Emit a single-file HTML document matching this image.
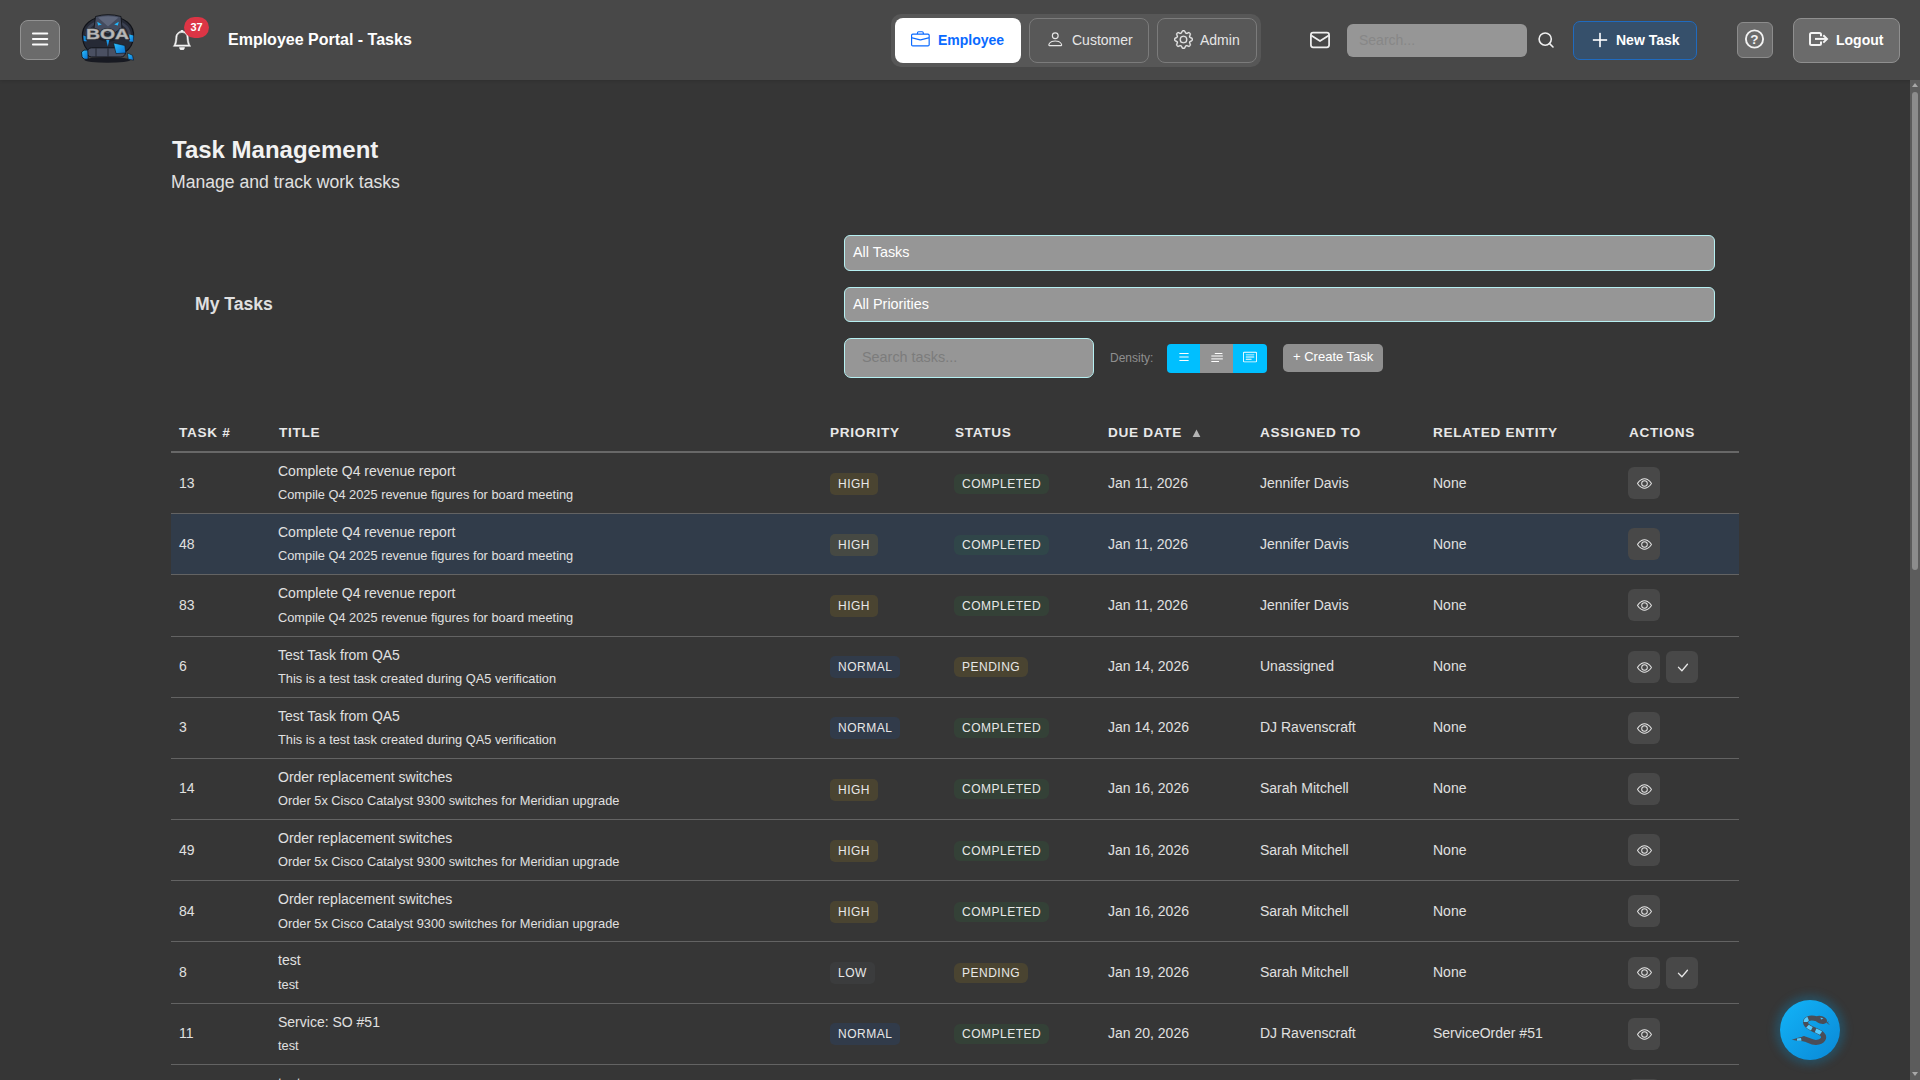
<!DOCTYPE html>
<html><head><meta charset="utf-8">
<style>
*{box-sizing:border-box}
html,body{margin:0;padding:0;width:1920px;height:1080px;overflow:hidden;background:#363636;font-family:"Liberation Sans",sans-serif;color:#e0e0e0}
.abs{position:absolute}
svg{display:block}
#hdr{position:absolute;left:0;top:0;width:1920px;height:80px;background:#484848;box-shadow:0 1px 3px rgba(0,0,0,0.12)}
.btn{position:absolute;border-radius:8px}
#menu{left:20px;top:20px;width:40px;height:40px;background:#6b6b6b;border:1px solid #929292;border-radius:8px}
#ttl{left:228px;top:30px;font-size:16px;font-weight:bold;color:#fff;line-height:20px;white-space:nowrap}
#badge{left:184px;top:17px;width:25px;height:21px;border-radius:11px;background:#dc3545;color:#fff;font-size:11px;font-weight:bold;text-align:center;line-height:21px}
#grp{left:891px;top:14px;width:370px;height:53px;background:#575757;border-radius:10px}
.nb{position:absolute;top:18px;height:45px;border-radius:8px;font-size:14px;white-space:nowrap}
#emp{left:895px;width:126px;background:#fff;color:#0a6aff;font-weight:bold}
#cus{left:1029px;width:120px;background:#585858;border:1px solid #7b7b7b;color:#e6e6e6}
#adm{left:1157px;width:100px;background:#585858;border:1px solid #7b7b7b;color:#e6e6e6}
.nb span{position:absolute;top:13px;line-height:18px}
.nb svg{position:absolute}
#hsearch{left:1347px;top:24px;width:180px;height:33px;background:#969696;border-radius:6px}
#hsearch span{position:absolute;left:12px;top:7px;font-size:14px;line-height:18px;color:#878787}
#newt{left:1573px;top:21px;width:124px;height:39px;background:#36506b;border:1px solid #1f6bc0;border-radius:7px;color:#fff;font-weight:bold;font-size:14px}
#help{left:1737px;top:22px;width:36px;height:36px;background:#6b6b6b;border:1px solid #8c8c8c;border-radius:6px}
#logout{left:1793px;top:18px;width:107px;height:45px;background:#6b6b6b;border:1px solid #8f8f8f;border-radius:8px;color:#fff;font-weight:bold;font-size:14px}
/* content */
#h1{left:172px;top:136px;font-size:24px;font-weight:bold;color:#f2f2f2;line-height:28.8px;white-space:nowrap}
#sub{left:171px;top:172px;font-size:17.6px;color:#e0e0e0;line-height:21.12px;white-space:nowrap}
#mytasks{left:195px;top:294px;font-size:17.6px;font-weight:bold;color:#e0e0e0;line-height:21.12px;white-space:nowrap}
.sel{position:absolute;left:844px;width:871px;height:35.6px;background:#969696;border:1px solid #b6f0f2;border-radius:6px;color:#fff;font-size:14.4px}
.sel span{position:absolute;left:8px;top:7px;line-height:18px}
#sel1{top:235.2px}
#sel2{top:286.8px}
#tsearch{left:844px;top:338px;width:250px;height:40px;background:#969696;border:1px solid #b6f0f2;border-radius:7px}
#tsearch span{position:absolute;left:17px;top:9px;font-size:14.4px;line-height:18px;color:#7c7c7c}
#dens{left:1110px;top:351px;font-size:12px;line-height:15px;color:#8f8f8f}
#dgrp{left:1167px;top:344px;width:100px;height:29px;border-radius:4px;overflow:hidden;background:#00bfff}
#dgrp .mid{position:absolute;left:33px;top:0;width:33px;height:29px;background:#939393}
#create{left:1283px;top:344px;width:100px;height:28px;background:#8f8f8f;border-radius:5px;color:#fff;font-size:13px}
#create span{position:absolute;left:10px;top:5px;line-height:15px}
/* table */
#tbl{position:absolute;left:171px;top:414.55px;width:1568px;border-collapse:collapse;table-layout:fixed}
#tbl th{font-size:13.6px;font-weight:bold;letter-spacing:0.68px;text-align:left;color:#e8e8e8;padding:8px 8px;line-height:20.4px;border-bottom:2px solid #686868;white-space:nowrap}
#tbl td{padding:8px 8px;font-size:14px;line-height:21px;border-bottom:1px solid #636363;vertical-align:middle;white-space:nowrap;color:#e0e0e0}
#tbl tr.hl td{background:#313c4a}
.t1{line-height:21px;font-size:14px;position:relative;left:-1px}
.t2{font-size:12.8px;line-height:19.1875px;margin-top:4px;position:relative;left:-1px;top:-0.7px}
.bd{display:inline-block;font-size:12px;letter-spacing:0.5px;padding:0 8px;border-radius:5px;color:#e8e8e8;vertical-align:baseline;line-height:normal}
.pr{padding-top:4px;padding-bottom:4px;position:relative;top:0.6px}
.st{padding-top:3px;padding-bottom:3px;position:relative;left:-1px;border-radius:6px}
.high{background:rgba(255,193,7,0.1)}
.normal{background:rgba(13,110,253,0.1)}
.low{background:rgba(108,117,125,0.1)}
.comp{background:rgba(40,167,69,0.1)}
.pend{background:rgba(255,193,7,0.1)}
.ab{display:inline-block;width:32px;height:32px;border-radius:6px;background:#484848;vertical-align:middle;margin-right:6px;position:relative;left:-1px}
.ab svg{position:absolute;left:8px;top:8px}
#sbar{left:1910px;top:80px;width:10px;height:1000px;background:#5c5c5c}
#thumb{left:1912px;top:92px;width:6px;height:478px;background:#8c8c8c;border-radius:3px}
#fab{left:1780px;top:1000px;width:60px;height:60px;border-radius:30px;background:linear-gradient(135deg,#12b4f8,#0a88d6);box-shadow:0 0 9px 5px rgba(0,150,220,0.25)}
</style></head>
<body>
<div id="hdr"></div>
<div id="menu" class="abs"><svg style="position:absolute;left:0;top:0" width="38" height="38" viewBox="0 0 38 38" stroke="#fafafa" stroke-width="1.9" stroke-linecap="round"><path d="M11.9 12.5H26.3M11.9 18H26.3M11.9 23.5H26.3"/></svg></div>
<!-- logo -->
<svg class="abs" style="left:75px;top:10px" width="70" height="60" viewBox="0 0 70 60">
<defs>
<linearGradient id="lgs" x1="0" y1="0" x2="0" y2="1"><stop offset="0" stop-color="#dcdcdc"/><stop offset="0.55" stop-color="#a9a9a9"/><stop offset="1" stop-color="#7d7d7d"/></linearGradient>
<linearGradient id="lgb" x1="0" y1="0" x2="1" y2="1"><stop offset="0" stop-color="#2cc3ff"/><stop offset="1" stop-color="#0a6fd0"/></linearGradient>
</defs>
<ellipse cx="32.5" cy="50" rx="23" ry="2.8" fill="#181a22"/>
<path d="M7.5 27 C6.5 15 16 6.5 33 6 C50 6.5 59.5 15 58.5 27 C58 34 55 39 50 42 L15 42 C10.5 39 8 34 7.5 27Z" fill="#262a36" stroke="#101218" stroke-width="1.2"/>
<path d="M11.5 25 C11.5 16 20 11 33 10.5 C46 11 54.5 16 54.5 25" fill="none" stroke="#3b4152" stroke-width="2.6"/>
<path d="M20.5 6.5 Q33 2.8 46 6.5 L47 18 Q40.5 24 33 24 Q25.5 24 19 18Z" fill="#444b5e" stroke="#12141a" stroke-width="0.9"/>
<path d="M23 7.5 Q33 5 43.5 7.5 L33 16.5Z" fill="#5e667b"/>
<path d="M22.2 11.8 L26.8 14.6 L23.2 15.6Z M43.8 11.8 L39.2 14.6 L42.8 15.6Z" fill="#22b8ff"/>
<path d="M22 23 Q33 31 44 23 L43 29 Q33 35 23 29Z" fill="#1b1e27"/>
<path d="M30.3 26 L32.8 36.5 L35.3 26Z" fill="url(#lgb)"/>
<path d="M54.3 24.5 L58.4 25.6 L58.3 31.8 L54.6 31.5Z" fill="url(#lgb)"/>
<path d="M8.3 25.5 L11.3 26.5 L11.6 31.5 L8.8 31Z" fill="#1486de"/>
<rect x="12" y="37.8" width="38.5" height="9.2" rx="4.6" fill="#4a5062" stroke="#101218" stroke-width="1"/>
<path d="M21 38.3 V46.5 M33 38.3 V46.5" stroke="#1a1d26" stroke-width="0.8"/>
<path d="M38.5 33 L49.8 35.5 L50.8 43 L41 43.6Z" fill="url(#lgb)" stroke="#101218" stroke-width="0.6"/>
<path d="M6.5 42 Q8.5 39.3 12.8 40 L13.2 49 Q8.6 50.2 7 46.8Z" fill="url(#lgb)" stroke="#101218" stroke-width="0.8"/>
<path d="M52.5 43 L57.5 45.3 L58.6 50.2 L53.2 49.2Z" fill="url(#lgb)" stroke="#101218" stroke-width="0.6"/>
<text x="32.5" y="29.4" text-anchor="middle" font-family="Liberation Sans" font-weight="bold" font-size="14.5" textLength="43" lengthAdjust="spacingAndGlyphs" fill="none" stroke="#2a2d35" stroke-width="2">BOA</text><text x="32.5" y="29.4" text-anchor="middle" font-family="Liberation Sans" font-weight="bold" font-size="14.5" textLength="43" lengthAdjust="spacingAndGlyphs" fill="#b9b9b9" stroke="#a4a4a4" stroke-width="0.4">BOA</text>
</svg>
<svg class="abs" style="left:172.1px;top:30px" width="20" height="20" viewBox="0 0 16 16" fill="#f4f4f4" stroke="#f4f4f4" stroke-width="0.45"><path d="M8 16a2 2 0 0 0 2-2H6a2 2 0 0 0 2 2M8 1.918l-.797.161A4 4 0 0 0 4 6c0 .628-.134 2.197-.459 3.742-.16.767-.376 1.566-.663 2.258h10.244c-.287-.692-.502-1.49-.663-2.258C12.134 8.197 12 6.628 12 6a4 4 0 0 0-3.203-3.92zM14.22 12c.223.447.481.801.78 1H1c.299-.199.557-.553.78-1C2.68 10.2 3 6.880 3 6c0-2.42 1.72-4.44 4.005-4.901a1 1 0 1 1 1.99 0A5 5 0 0 1 13 6c0 .88.32 4.2 1.22 6"/></svg>
<div id="badge" class="abs">37</div>
<div id="ttl" class="abs">Employee Portal - Tasks</div>

<div id="grp" class="abs"></div>
<div id="emp" class="nb">
<svg style="left:16.2px;top:11.7px" width="18.75" height="18.75" viewBox="0 0 16 16" fill="#0a6aff"><path d="M6.5 1A1.5 1.5 0 0 0 5 2.5V3H1.5A1.5 1.5 0 0 0 0 4.5v8A1.5 1.5 0 0 0 1.5 14h13a1.5 1.5 0 0 0 1.5-1.5v-8A1.5 1.5 0 0 0 14.5 3H11v-.5A1.5 1.5 0 0 0 9.5 1zm0 1h3a.5.5 0 0 1 .5.5V3H6v-.5a.5.5 0 0 1 .5-.5m1.886 6.914L15 7.151V12.5a.5.5 0 0 1-.5.5h-13a.5.5 0 0 1-.5-.5V7.15l6.614 1.764a1.5 1.5 0 0 0 .772 0M1.5 4h13a.5.5 0 0 1 .5.5v1.616L8.129 7.948a.5.5 0 0 1-.258 0L1 6.116V4.5a.5.5 0 0 1 .5-.5"/></svg>
<span style="left:43px">Employee</span></div>
<div id="cus" class="nb">
<svg style="left:15.5px;top:10.75px" width="18.5" height="18.5" viewBox="0 0 16 16" fill="#e6e6e6"><path d="M8 8a3 3 0 1 0 0-6 3 3 0 0 0 0 6m2-3a2 2 0 1 1-4 0 2 2 0 0 1 4 0m4 8c0 1-1 1-1 1H3s-1 0-1-1 1-4 6-4 6 3 6 4m-1-.004c-.001-.246-.154-.986-.832-1.664C11.516 10.68 10.289 10 8 10s-3.516.68-4.168 1.332c-.678.678-.83 1.418-.832 1.664z"/></svg>
<span style="left:42px;top:12px">Customer</span></div>
<div id="adm" class="nb">
<svg style="left:15.7px;top:10.5px" width="19" height="19" viewBox="0 0 16 16" fill="#e6e6e6" stroke="#e6e6e6" stroke-width="0.2"><path d="M8 4.754a3.246 3.246 0 1 0 0 6.492 3.246 3.246 0 0 0 0-6.492M5.754 8a2.246 2.246 0 1 1 4.492 0 2.246 2.246 0 0 1-4.492 0"/><path d="M9.796 1.343c-.527-1.790-3.065-1.790-3.592 0l-.094.319a.873.873 0 0 1-1.255.52l-.292-.16c-1.64-.892-3.433.902-2.54 2.541l.159.292a.873.873 0 0 1-.52 1.255l-.319.094c-1.79.527-1.79 3.065 0 3.592l.319.094a.873.873 0 0 1 .52 1.255l-.16.292c-.892 1.64.901 3.434 2.541 2.54l.292-.159a.873.873 0 0 1 1.255.52l.094.319c.527 1.79 3.065 1.79 3.592 0l.094-.319a.873.873 0 0 1 1.255-.52l.292.16c1.64.893 3.434-.902 2.54-2.541l-.159-.292a.873.873 0 0 1 .52-1.255l.319-.094c1.79-.527 1.79-3.065 0-3.592l-.319-.094a.873.873 0 0 1-.52-1.255l.16-.292c.893-1.64-.902-3.433-2.541-2.54l-.292.159a.873.873 0 0 1-1.255-.52zm-2.633.283c.246-.835 1.428-.835 1.674 0l.094.319a1.873 1.873 0 0 0 2.693 1.115l.291-.16c.764-.415 1.6.42 1.184 1.185l-.159.292a1.873 1.873 0 0 0 1.116 2.692l.318.094c.835.246.835 1.428 0 1.674l-.319.094a1.873 1.873 0 0 0-1.115 2.693l.16.291c.415.764-.42 1.6-1.185 1.184l-.291-.159a1.873 1.873 0 0 0-2.693 1.116l-.094.318c-.246.835-1.428.835-1.674 0l-.094-.319a1.873 1.873 0 0 0-2.692-1.115l-.292.16c-.764.415-1.6-.42-1.184-1.185l.159-.291A1.873 1.873 0 0 0 1.945 8.930l-.319-.094c-.835-.246-.835-1.428 0-1.674l.319-.094A1.873 1.873 0 0 0 3.060 4.377l-.16-.292c-.415-.764.42-1.6 1.185-1.184l.292.159a1.873 1.873 0 0 0 2.692-1.115z"/></svg>
<span style="left:42px;top:12px">Admin</span></div>

<svg class="abs" style="left:1305px;top:26px" width="30" height="28" viewBox="0 0 30 28" fill="none" stroke="#efefef" stroke-width="1.75"><rect x="5.9" y="6.7" width="18.2" height="14.6" rx="2.2"/><path d="M6.3 9.4 L15 15.1 L23.7 9.4" stroke-linejoin="round"/></svg>
<div id="hsearch" class="abs"><span>Search...</span></div>
<svg class="abs" style="left:1533px;top:26px" width="28" height="28" viewBox="0 0 28 28" fill="none" stroke="#efefef" stroke-width="1.6"><circle cx="12.2" cy="13.1" r="6.1"/><path d="M16.6 17.6 L20 21" stroke-linecap="round"/></svg>
<div id="newt" class="abs">
<svg style="position:absolute;left:18px;top:10px" width="16" height="16" viewBox="0 0 16 16" fill="#fff"><rect x="0.85" y="7.2" width="14.3" height="1.6"/><rect x="7.2" y="0.85" width="1.6" height="14.3"/></svg>
<span style="position:absolute;left:42px;top:9px;line-height:18px">New Task</span></div>
<div id="help" class="abs">
<svg style="position:absolute;left:-1px;top:-1px" width="36" height="36" viewBox="0 0 36 36"><circle cx="17.5" cy="17" r="8.6" fill="none" stroke="#f2f2f2" stroke-width="1.9"/><text x="17.4" y="22" text-anchor="middle" font-family="Liberation Sans" font-weight="bold" font-size="13.5" fill="#f2f2f2">?</text></svg></div>
<div id="logout" class="abs">
<svg style="position:absolute;left:11px;top:9px" width="26" height="22" viewBox="0 0 26 22" fill="none" stroke="#f4f4f4" stroke-width="2"><path d="M16 8.3 V6.5 Q16 5 14.5 5 H6.5 Q5 5 5 6.5 V15.5 Q5 17 6.5 17 H14.5 Q16 17 16 15.5 V13.6"/><path d="M10 10.9 H21.5"/><path d="M18.3 7.2 L22 10.9 L18.3 14.6"/></svg>
<span style="position:absolute;left:42px;top:12px;line-height:18px">Logout</span></div>

<!-- content -->
<div id="h1" class="abs">Task Management</div>
<div id="sub" class="abs">Manage and track work tasks</div>
<div id="mytasks" class="abs">My Tasks</div>
<div id="sel1" class="sel"><span>All Tasks</span></div>
<div id="sel2" class="sel"><span>All Priorities</span></div>
<div id="tsearch" class="abs"><span>Search tasks...</span></div>
<div id="dens" class="abs">Density:</div>
<div id="dgrp" class="abs"><div class="mid"></div>
<svg style="position:absolute;left:10px;top:6px" width="14" height="14" viewBox="0 0 16 16" fill="#fff"><path fill-rule="evenodd" d="M2.5 12a.5.5 0 0 1 .5-.5h10a.5.5 0 0 1 0 1H3a.5.5 0 0 1-.5-.5m0-4a.5.5 0 0 1 .5-.5h10a.5.5 0 0 1 0 1H3a.5.5 0 0 1-.5-.5m0-4a.5.5 0 0 1 .5-.5h10a.5.5 0 0 1 0 1H3a.5.5 0 0 1-.5-.5"/></svg>
<svg style="position:absolute;left:43.7px;top:7.5px" width="14" height="14" viewBox="0 0 14 14" fill="#fff"><rect x="3.8" y="1" width="7.6" height="1" /><rect x="0.3" y="3.5" width="11.5" height="1"/><rect x="0.3" y="6.4" width="11.5" height="1"/><rect x="0.3" y="9" width="7.7" height="1"/></svg>
<svg style="position:absolute;left:76px;top:6px" width="14" height="14" viewBox="0 0 16 16" fill="#fff"><path d="M14.5 3a.5.5 0 0 1 .5.5v9a.5.5 0 0 1-.5.5h-13a.5.5 0 0 1-.5-.5v-9a.5.5 0 0 1 .5-.5zm-13-1A1.5 1.5 0 0 0 0 3.5v9A1.5 1.5 0 0 0 1.5 14h13a1.5 1.5 0 0 0 1.5-1.5v-9A1.5 1.5 0 0 0 14.5 2z"/><path d="M3 5.5a.5.5 0 0 1 .5-.5h9a.5.5 0 0 1 0 1h-9a.5.5 0 0 1-.5-.5M3 8a.5.5 0 0 1 .5-.5h9a.5.5 0 0 1 0 1h-9A.5.5 0 0 1 3 8m0 2.5a.5.5 0 0 1 .5-.5h6a.5.5 0 0 1 0 1h-6a.5.5 0 0 1-.5-.5"/></svg>
</div>
<div id="create" class="abs"><span>+ Create Task</span></div>

<table id="tbl">
<colgroup><col style="width:100px"><col style="width:551px"><col style="width:125px"><col style="width:153px"><col style="width:152px"><col style="width:173px"><col style="width:196px"><col style="width:118px"></colgroup>
<thead><tr><th>TASK #</th><th>TITLE</th><th>PRIORITY</th><th>STATUS</th><th>DUE DATE <svg width="9" height="8" viewBox="0 0 9 8" style="display:inline-block;vertical-align:baseline;margin-left:5.5px"><path d="M0.6 7.9 L4.5 0.5 L8.4 7.9Z" fill="#b4b4b4"/></svg></th><th>ASSIGNED TO</th><th>RELATED ENTITY</th><th>ACTIONS</th></tr></thead>
<tbody>
<tr><td>13</td><td><div class="t1">Complete Q4 revenue report</div><div class="t2">Compile Q4 2025 revenue figures for board meeting</div></td><td><span class="bd pr high">HIGH</span></td><td><span class="bd st comp">COMPLETED</span></td><td>Jan 11, 2026</td><td>Jennifer Davis</td><td>None</td><td><span class="ab"><svg width="15" height="15" viewBox="0 0 16 16" fill="#e8e8e8" style="left:9px;top:8.9px"><path d="M16 8s-3-5.5-8-5.5S0 8 0 8s3 5.5 8 5.5S16 8 16 8M1.173 8a13 13 0 0 1 1.66-2.043C4.12 4.668 5.88 3.5 8 3.5s3.879 1.168 5.168 2.457A13 13 0 0 1 14.828 8q-.086.13-.195.288c-.335.48-.83 1.12-1.465 1.755C11.879 11.332 10.119 12.5 8 12.5s-3.879-1.168-5.168-2.457A13 13 0 0 1 1.172 8z"/><path d="M8 5.5a2.5 2.5 0 1 0 0 5 2.5 2.5 0 0 0 0-5M4.5 8a3.5 3.5 0 1 1 7 0 3.5 3.5 0 0 1-7 0"/></svg></span></td></tr>
<tr class="hl"><td>48</td><td><div class="t1">Complete Q4 revenue report</div><div class="t2">Compile Q4 2025 revenue figures for board meeting</div></td><td><span class="bd pr high">HIGH</span></td><td><span class="bd st comp">COMPLETED</span></td><td>Jan 11, 2026</td><td>Jennifer Davis</td><td>None</td><td><span class="ab"><svg width="15" height="15" viewBox="0 0 16 16" fill="#e8e8e8" style="left:9px;top:8.9px"><path d="M16 8s-3-5.5-8-5.5S0 8 0 8s3 5.5 8 5.5S16 8 16 8M1.173 8a13 13 0 0 1 1.66-2.043C4.12 4.668 5.88 3.5 8 3.5s3.879 1.168 5.168 2.457A13 13 0 0 1 14.828 8q-.086.13-.195.288c-.335.48-.83 1.12-1.465 1.755C11.879 11.332 10.119 12.5 8 12.5s-3.879-1.168-5.168-2.457A13 13 0 0 1 1.172 8z"/><path d="M8 5.5a2.5 2.5 0 1 0 0 5 2.5 2.5 0 0 0 0-5M4.5 8a3.5 3.5 0 1 1 7 0 3.5 3.5 0 0 1-7 0"/></svg></span></td></tr>
<tr><td>83</td><td><div class="t1">Complete Q4 revenue report</div><div class="t2">Compile Q4 2025 revenue figures for board meeting</div></td><td><span class="bd pr high">HIGH</span></td><td><span class="bd st comp">COMPLETED</span></td><td>Jan 11, 2026</td><td>Jennifer Davis</td><td>None</td><td><span class="ab"><svg width="15" height="15" viewBox="0 0 16 16" fill="#e8e8e8" style="left:9px;top:8.9px"><path d="M16 8s-3-5.5-8-5.5S0 8 0 8s3 5.5 8 5.5S16 8 16 8M1.173 8a13 13 0 0 1 1.66-2.043C4.12 4.668 5.88 3.5 8 3.5s3.879 1.168 5.168 2.457A13 13 0 0 1 14.828 8q-.086.13-.195.288c-.335.48-.83 1.12-1.465 1.755C11.879 11.332 10.119 12.5 8 12.5s-3.879-1.168-5.168-2.457A13 13 0 0 1 1.172 8z"/><path d="M8 5.5a2.5 2.5 0 1 0 0 5 2.5 2.5 0 0 0 0-5M4.5 8a3.5 3.5 0 1 1 7 0 3.5 3.5 0 0 1-7 0"/></svg></span></td></tr>
<tr><td>6</td><td><div class="t1">Test Task from QA5</div><div class="t2">This is a test task created during QA5 verification</div></td><td><span class="bd pr normal">NORMAL</span></td><td><span class="bd st pend">PENDING</span></td><td>Jan 14, 2026</td><td>Unassigned</td><td>None</td><td><span class="ab"><svg width="15" height="15" viewBox="0 0 16 16" fill="#e8e8e8" style="left:9px;top:8.9px"><path d="M16 8s-3-5.5-8-5.5S0 8 0 8s3 5.5 8 5.5S16 8 16 8M1.173 8a13 13 0 0 1 1.66-2.043C4.12 4.668 5.88 3.5 8 3.5s3.879 1.168 5.168 2.457A13 13 0 0 1 14.828 8q-.086.13-.195.288c-.335.48-.83 1.12-1.465 1.755C11.879 11.332 10.119 12.5 8 12.5s-3.879-1.168-5.168-2.457A13 13 0 0 1 1.172 8z"/><path d="M8 5.5a2.5 2.5 0 1 0 0 5 2.5 2.5 0 0 0 0-5M4.5 8a3.5 3.5 0 1 1 7 0 3.5 3.5 0 0 1-7 0"/></svg></span><span class="ab"><svg width="15" height="15" viewBox="0 0 16 16" fill="#e8e8e8" style="left:8.5px;top:9.2px"><path d="M12.736 3.97a.733.733 0 0 1 1.047 0c.286.289.29.756.01 1.05L7.88 12.01a.733.733 0 0 1-1.065.02L3.217 8.384a.733.733 0 0 1 .02-1.06.733.733 0 0 1 1.045.01l3.052 3.093 5.4-6.425z"/></svg></span></td></tr>
<tr><td>3</td><td><div class="t1">Test Task from QA5</div><div class="t2">This is a test task created during QA5 verification</div></td><td><span class="bd pr normal">NORMAL</span></td><td><span class="bd st comp">COMPLETED</span></td><td>Jan 14, 2026</td><td>DJ Ravenscraft</td><td>None</td><td><span class="ab"><svg width="15" height="15" viewBox="0 0 16 16" fill="#e8e8e8" style="left:9px;top:8.9px"><path d="M16 8s-3-5.5-8-5.5S0 8 0 8s3 5.5 8 5.5S16 8 16 8M1.173 8a13 13 0 0 1 1.66-2.043C4.12 4.668 5.88 3.5 8 3.5s3.879 1.168 5.168 2.457A13 13 0 0 1 14.828 8q-.086.13-.195.288c-.335.48-.83 1.12-1.465 1.755C11.879 11.332 10.119 12.5 8 12.5s-3.879-1.168-5.168-2.457A13 13 0 0 1 1.172 8z"/><path d="M8 5.5a2.5 2.5 0 1 0 0 5 2.5 2.5 0 0 0 0-5M4.5 8a3.5 3.5 0 1 1 7 0 3.5 3.5 0 0 1-7 0"/></svg></span></td></tr>
<tr><td>14</td><td><div class="t1">Order replacement switches</div><div class="t2">Order 5x Cisco Catalyst 9300 switches for Meridian upgrade</div></td><td><span class="bd pr high">HIGH</span></td><td><span class="bd st comp">COMPLETED</span></td><td>Jan 16, 2026</td><td>Sarah Mitchell</td><td>None</td><td><span class="ab"><svg width="15" height="15" viewBox="0 0 16 16" fill="#e8e8e8" style="left:9px;top:8.9px"><path d="M16 8s-3-5.5-8-5.5S0 8 0 8s3 5.5 8 5.5S16 8 16 8M1.173 8a13 13 0 0 1 1.66-2.043C4.12 4.668 5.88 3.5 8 3.5s3.879 1.168 5.168 2.457A13 13 0 0 1 14.828 8q-.086.13-.195.288c-.335.48-.83 1.12-1.465 1.755C11.879 11.332 10.119 12.5 8 12.5s-3.879-1.168-5.168-2.457A13 13 0 0 1 1.172 8z"/><path d="M8 5.5a2.5 2.5 0 1 0 0 5 2.5 2.5 0 0 0 0-5M4.5 8a3.5 3.5 0 1 1 7 0 3.5 3.5 0 0 1-7 0"/></svg></span></td></tr>
<tr><td>49</td><td><div class="t1">Order replacement switches</div><div class="t2">Order 5x Cisco Catalyst 9300 switches for Meridian upgrade</div></td><td><span class="bd pr high">HIGH</span></td><td><span class="bd st comp">COMPLETED</span></td><td>Jan 16, 2026</td><td>Sarah Mitchell</td><td>None</td><td><span class="ab"><svg width="15" height="15" viewBox="0 0 16 16" fill="#e8e8e8" style="left:9px;top:8.9px"><path d="M16 8s-3-5.5-8-5.5S0 8 0 8s3 5.5 8 5.5S16 8 16 8M1.173 8a13 13 0 0 1 1.66-2.043C4.12 4.668 5.88 3.5 8 3.5s3.879 1.168 5.168 2.457A13 13 0 0 1 14.828 8q-.086.13-.195.288c-.335.48-.83 1.12-1.465 1.755C11.879 11.332 10.119 12.5 8 12.5s-3.879-1.168-5.168-2.457A13 13 0 0 1 1.172 8z"/><path d="M8 5.5a2.5 2.5 0 1 0 0 5 2.5 2.5 0 0 0 0-5M4.5 8a3.5 3.5 0 1 1 7 0 3.5 3.5 0 0 1-7 0"/></svg></span></td></tr>
<tr><td>84</td><td><div class="t1">Order replacement switches</div><div class="t2">Order 5x Cisco Catalyst 9300 switches for Meridian upgrade</div></td><td><span class="bd pr high">HIGH</span></td><td><span class="bd st comp">COMPLETED</span></td><td>Jan 16, 2026</td><td>Sarah Mitchell</td><td>None</td><td><span class="ab"><svg width="15" height="15" viewBox="0 0 16 16" fill="#e8e8e8" style="left:9px;top:8.9px"><path d="M16 8s-3-5.5-8-5.5S0 8 0 8s3 5.5 8 5.5S16 8 16 8M1.173 8a13 13 0 0 1 1.66-2.043C4.12 4.668 5.88 3.5 8 3.5s3.879 1.168 5.168 2.457A13 13 0 0 1 14.828 8q-.086.13-.195.288c-.335.48-.83 1.12-1.465 1.755C11.879 11.332 10.119 12.5 8 12.5s-3.879-1.168-5.168-2.457A13 13 0 0 1 1.172 8z"/><path d="M8 5.5a2.5 2.5 0 1 0 0 5 2.5 2.5 0 0 0 0-5M4.5 8a3.5 3.5 0 1 1 7 0 3.5 3.5 0 0 1-7 0"/></svg></span></td></tr>
<tr><td>8</td><td><div class="t1">test</div><div class="t2">test</div></td><td><span class="bd pr low">LOW</span></td><td><span class="bd st pend">PENDING</span></td><td>Jan 19, 2026</td><td>Sarah Mitchell</td><td>None</td><td><span class="ab"><svg width="15" height="15" viewBox="0 0 16 16" fill="#e8e8e8" style="left:9px;top:8.9px"><path d="M16 8s-3-5.5-8-5.5S0 8 0 8s3 5.5 8 5.5S16 8 16 8M1.173 8a13 13 0 0 1 1.66-2.043C4.12 4.668 5.88 3.5 8 3.5s3.879 1.168 5.168 2.457A13 13 0 0 1 14.828 8q-.086.13-.195.288c-.335.48-.83 1.12-1.465 1.755C11.879 11.332 10.119 12.5 8 12.5s-3.879-1.168-5.168-2.457A13 13 0 0 1 1.172 8z"/><path d="M8 5.5a2.5 2.5 0 1 0 0 5 2.5 2.5 0 0 0 0-5M4.5 8a3.5 3.5 0 1 1 7 0 3.5 3.5 0 0 1-7 0"/></svg></span><span class="ab"><svg width="15" height="15" viewBox="0 0 16 16" fill="#e8e8e8" style="left:8.5px;top:9.2px"><path d="M12.736 3.97a.733.733 0 0 1 1.047 0c.286.289.29.756.01 1.05L7.88 12.01a.733.733 0 0 1-1.065.02L3.217 8.384a.733.733 0 0 1 .02-1.06.733.733 0 0 1 1.045.01l3.052 3.093 5.4-6.425z"/></svg></span></td></tr>
<tr><td>11</td><td><div class="t1">Service: SO #51</div><div class="t2">test</div></td><td><span class="bd pr normal">NORMAL</span></td><td><span class="bd st comp">COMPLETED</span></td><td>Jan 20, 2026</td><td>DJ Ravenscraft</td><td>ServiceOrder #51</td><td><span class="ab"><svg width="15" height="15" viewBox="0 0 16 16" fill="#e8e8e8" style="left:9px;top:8.9px"><path d="M16 8s-3-5.5-8-5.5S0 8 0 8s3 5.5 8 5.5S16 8 16 8M1.173 8a13 13 0 0 1 1.66-2.043C4.12 4.668 5.88 3.5 8 3.5s3.879 1.168 5.168 2.457A13 13 0 0 1 14.828 8q-.086.13-.195.288c-.335.48-.83 1.12-1.465 1.755C11.879 11.332 10.119 12.5 8 12.5s-3.879-1.168-5.168-2.457A13 13 0 0 1 1.172 8z"/><path d="M8 5.5a2.5 2.5 0 1 0 0 5 2.5 2.5 0 0 0 0-5M4.5 8a3.5 3.5 0 1 1 7 0 3.5 3.5 0 0 1-7 0"/></svg></span></td></tr>
<tr><td>12</td><td><div class="t1">test</div><div class="t2">test</div></td><td><span class="bd pr normal">NORMAL</span></td><td><span class="bd st pend">PENDING</span></td><td>Jan 21, 2026</td><td>Sarah Mitchell</td><td>None</td><td><span class="ab"><svg width="15" height="15" viewBox="0 0 16 16" fill="#e8e8e8" style="left:9px;top:8.9px"><path d="M16 8s-3-5.5-8-5.5S0 8 0 8s3 5.5 8 5.5S16 8 16 8M1.173 8a13 13 0 0 1 1.66-2.043C4.12 4.668 5.88 3.5 8 3.5s3.879 1.168 5.168 2.457A13 13 0 0 1 14.828 8q-.086.13-.195.288c-.335.48-.83 1.12-1.465 1.755C11.879 11.332 10.119 12.5 8 12.5s-3.879-1.168-5.168-2.457A13 13 0 0 1 1.172 8z"/><path d="M8 5.5a2.5 2.5 0 1 0 0 5 2.5 2.5 0 0 0 0-5M4.5 8a3.5 3.5 0 1 1 7 0 3.5 3.5 0 0 1-7 0"/></svg></span></td></tr>
</tbody>
</table>

<div id="sbar" class="abs"></div>
<div id="thumb" class="abs"></div>
<svg class="abs" style="left:1912px;top:83.3px" width="6" height="4" viewBox="0 0 6 4"><path d="M0 4 L3 0 L6 4z" fill="#a8a8a8"/></svg>
<svg class="abs" style="left:1912px;top:1072px" width="6" height="4" viewBox="0 0 6 4"><path d="M0 0 L3 4 L6 0z" fill="#a8a8a8"/></svg>
<div id="fab" class="abs">
<svg style="position:absolute;left:0;top:0" width="60" height="60" viewBox="0 0 60 60">
<path d="M24.5 36.2 Q18 37.5 11.8 39.8 Q18 41.5 25 41.2Z" fill="#4a4d57"/>
<path d="M37 19 C30 16.5 24 19 26 24 C27.5 28.5 37.5 30 42 34 C45.5 37.5 43 42.3 36 42.4 C31 42.5 28 39.5 24 38.7" fill="none" stroke="#4a4d57" stroke-width="5" stroke-linecap="round"/>
<path d="M37 19 C30 16.5 24 19 26 24 C27.5 28.5 37.5 30 42 34 C45.5 37.5 43 42.3 36 42.4 C31 42.5 28 39.5 24 38.7" fill="none" stroke="#55ccff" stroke-width="4" stroke-dasharray="0 9 4.5 4.5 5 4 6 30" />
<path d="M17 38.6 L21 38.1 L21.5 40.7 L17 40.8Z" fill="#55ccff"/>
<ellipse cx="41" cy="19.8" rx="6.2" ry="3.8" transform="rotate(18 41 19.8)" fill="#4a4d57"/>
<path d="M40.5 17.6 L43.5 18.6 L41 19.4Z" fill="#4cc6ff"/>
<path d="M46.5 22 L49 24.5 M47.5 22.8 L48.2 21.6" stroke="#4a4d57" stroke-width="1" fill="none"/>
</svg></div>

</body></html>
